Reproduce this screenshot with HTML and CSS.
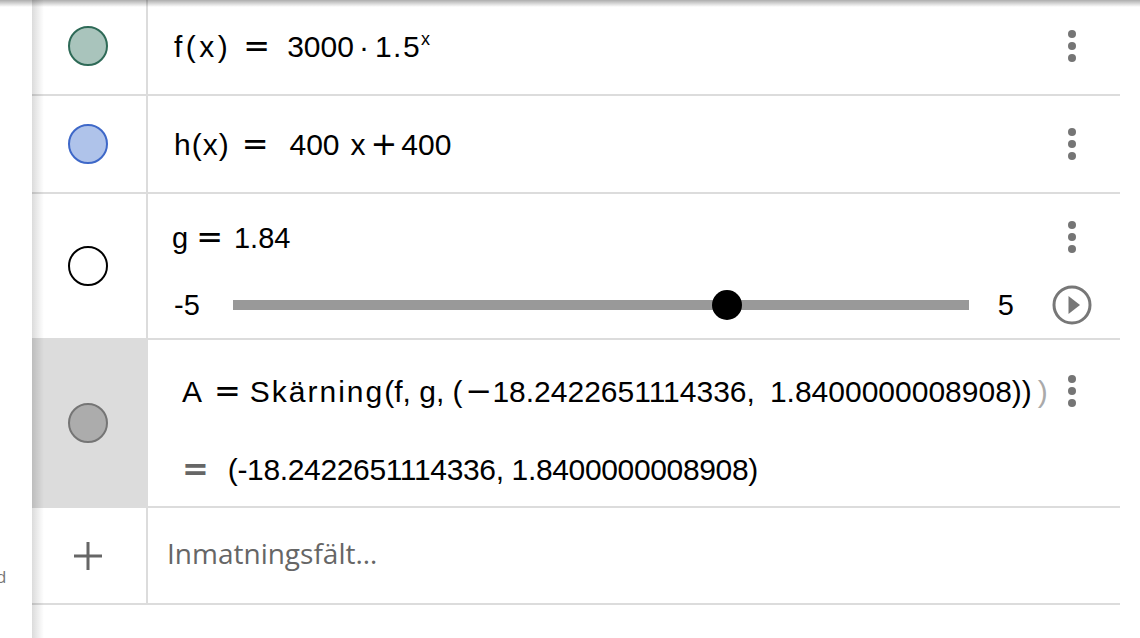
FILE: index.html
```html
<!DOCTYPE html>
<html lang="sv">

<head>
    <meta charset="UTF-8">
    <meta name="viewport" content="width=device-width, initial-scale=1.0">
    <title>Algebra</title>
    <link rel="stylesheet" href="styles.css">
</head>

<body>
    <div class="side">
        <span class="side-label">d</span>
    </div>

    <div class="algebra">
        <div class="rows">
            <div class="row row-first">
                <div class="marble-cell"><span class="marble marble-f"></span></div>
                <div class="row-body">
                    <div class="line">
                        <div class="expr"><span class="name name-wide">f(x)</span><span class="op">=</span><span>3000</span><span class="cdot">·</span><span class="base">1.5</span><sup>x</sup></div>
                        <div class="menu"><span></span><span></span><span></span></div>
                    </div>
                </div>
            </div>

            <div class="row row-h">
                <div class="marble-cell"><span class="marble marble-h"></span></div>
                <div class="row-body">
                    <div class="line">
                        <div class="expr"><span class="name">h(x)</span><span class="op">=</span><span class="coef">400</span><span class="var">x</span><span class="op op-plus">+</span><span>400</span></div>
                        <div class="menu"><span></span><span></span><span></span></div>
                    </div>
                </div>
            </div>

            <div class="row row-slider">
                <div class="marble-cell"><span class="marble marble-g"></span></div>
                <div class="row-body">
                    <div class="line">
                        <div class="expr expr-small"><span>g</span><span class="op op-tight">=</span><span>1.84</span></div>
                        <div class="menu"><span></span><span></span><span></span></div>
                    </div>
                    <div class="line slider-line">
                        <span class="slider-min">-5</span>
                        <div class="slider-track">
                            <span class="slider-knob" style="left: 67.2%"></span>
                        </div>
                        <span class="slider-max">5</span>
                        <div class="play-btn">
                            <svg width="40" height="40" viewBox="0 0 40 40">
                                <circle cx="20" cy="20" r="18" fill="none" stroke="#777" stroke-width="3" />
                                <polygon points="16.5,11 28,20 16.5,29" fill="#777" />
                            </svg>
                        </div>
                    </div>
                </div>
            </div>

            <div class="row row-point">
                <div class="marble-cell marble-cell-active"><span class="marble marble-a"></span></div>
                <div class="row-body">
                    <div class="line">
                        <div class="expr"><span>A</span><span class="op op-a">=</span><span class="cmd">Skärning</span>(f, g, (<span class="op neg">−</span>18.2422651114336,<span class="sep"></span>1.8400000008908))<span class="ghost-paren">)</span></div>
                        <div class="menu"><span></span><span></span><span></span></div>
                    </div>
                    <div class="line output-line">
                        <div class="expr"><span class="out-eq">=</span><span class="out-value">(-18.2422651114336, 1.8400000008908)</span></div>
                    </div>
                </div>
            </div>

            <div class="row row-input">
                <div class="marble-cell">
                    <svg width="28" height="28" viewBox="0 0 28 28">
                        <path d="M14 0V28M0 14H28" stroke="#666" stroke-width="3" />
                    </svg>
                </div>
                <div class="row-body">
                    <div class="placeholder">Inmatningsfält…</div>
                </div>
            </div>
        </div>
    </div>
</body>

</html>
```

FILE: styles.css
```css
* {
    box-sizing: border-box;
}

html,
body {
    margin: 0;
    padding: 0;
}

body {
    position: relative;
    display: flex;
    height: 638px;
    overflow: hidden;
    background: #fff;
    color: #000;
    font-family: "Liberation Sans", Arial, sans-serif;
}

/* toolbar shadow along the top edge */
body::before {
    content: "";
    position: absolute;
    left: 0;
    right: 0;
    top: 0;
    height: 7px;
    background: linear-gradient(rgba(0, 0, 0, 0.32), rgba(0, 0, 0, 0));
    z-index: 5;
    pointer-events: none;
}

.side {
    width: 32px;
    flex-shrink: 0;
    display: flex;
    flex-direction: column;
    justify-content: flex-end;
    padding-bottom: 50px;
    overflow: hidden;
}

.side-label {
    font-family: "Open Sans", sans-serif;
    font-size: 17px;
    color: #777;
    margin-left: -4px;
}

.algebra {
    position: relative;
    flex: 1;
    padding-right: 20px;
}

/* shadow of the algebra panel on its left edge */
.algebra::before {
    content: "";
    position: absolute;
    left: 0;
    top: 0;
    bottom: 0;
    width: 12px;
    background: linear-gradient(to right, rgba(0, 0, 0, 0.14), rgba(0, 0, 0, 0));
    z-index: 4;
    pointer-events: none;
}

.rows {
    margin-top: -2px;
}

.row {
    display: flex;
    border-bottom: 2px solid #dcdcdc;
}

.row-first {
    height: 98px;
}

.row-h {
    height: 98px;
}

.row-slider {
    height: 146px;
}

.row-point {
    height: 168px;
}

.row-input {
    height: 97px;
}

.marble-cell {
    width: 116px;
    flex-shrink: 0;
    display: flex;
    align-items: center;
    justify-content: center;
    padding-right: 2px;
    border-right: 2px solid #dcdcdc;
}

.marble-cell-active {
    background: #dcdcdc;
}

.marble {
    width: 40px;
    height: 40px;
    border-radius: 50%;
    border: 2px solid #000;
}

.marble-f {
    background: #a9c4bc;
    border-color: #2e6a57;
}

.marble-h {
    background: #afc3ea;
    border-color: #3e68c8;
}

.marble-g {
    background: #fff;
    border-color: #000;
}

.marble-a {
    background: #acacac;
    border-color: #757575;
}

.row-body {
    flex: 1;
    min-width: 0;
    display: flex;
    flex-direction: column;
    justify-content: center;
    padding: 0 28px 0 26px;
}

.line {
    display: flex;
    align-items: center;
    height: 36px;
    white-space: nowrap;
}

.expr {
    flex: 1;
    min-width: 0;
    font-size: 30px;
    line-height: 36px;
}

.expr-small {
    font-size: 29px;
}

.name {
    letter-spacing: 1px;
}

.name-wide {
    letter-spacing: 3.5px;
}

.op {
    font-family: "DejaVu Sans", sans-serif;
    font-size: 32px;
    margin: 0 17px 0 12px;
}

.op-plus {
    margin: 0 4px 0 5px;
}

.op-tight {
    margin: 0 11px 0 8px;
}

.op-a {
    margin: 0 9px 0 12px;
}

.neg {
    margin: 0 0 0 3px;
}

.coef {
    margin-left: 4px;
}

.var {
    margin-left: 11px;
}

.cdot {
    margin: 0 6px 0 5px;
}

.base {
    letter-spacing: 1.5px;
}

sup {
    font-size: 18px;
    line-height: 0;
    vertical-align: 12px;
    margin-left: 0;
}

.cmd {
    letter-spacing: 2px;
}

.sep {
    display: inline-block;
    width: 15px;
}

.ghost-paren {
    color: #aaa;
    margin-left: 6px;
}

.menu {
    width: 40px;
    flex-shrink: 0;
    display: flex;
    flex-direction: column;
    align-items: center;
    gap: 4px;
}

.menu span {
    width: 8px;
    height: 8px;
    border-radius: 50%;
    background: #757575;
}

/* slider row */
.row-slider .row-body {
    justify-content: flex-start;
    padding-top: 25px;
    padding-left: 24px;
}

.slider-line {
    height: 40px;
    margin-top: 30px;
    font-size: 29px;
}

.slider-min {
    margin-left: 2px;
}

.slider-track {
    position: relative;
    flex: 1;
    height: 10px;
    margin: 0 29px 0 33px;
    background: #999;
}

.slider-knob {
    position: absolute;
    top: 50%;
    width: 30px;
    height: 30px;
    border-radius: 50%;
    background: #000;
    transform: translate(-50%, -50%);
}

.play-btn {
    width: 40px;
    height: 40px;
    margin-left: 38px;
    flex-shrink: 0;
}

.play-btn svg {
    display: block;
}

/* point row */
.row-point .row-body {
    justify-content: flex-start;
    padding-top: 33px;
    padding-left: 34px;
}

.output-line {
    margin-top: 42px;
}

.out-eq {
    font-family: "DejaVu Sans", sans-serif;
    font-weight: bold;
    font-size: 32px;
    color: #666;
    margin-right: 19px;
}

.out-value {
    letter-spacing: -0.35px;
}

/* input row */
.row-input .row-body {
    padding-left: 19px;
    padding-bottom: 6px;
}

.placeholder {
    font-family: "Open Sans", sans-serif;
    font-size: 28px;
    line-height: 36px;
    color: #666;
}
```
